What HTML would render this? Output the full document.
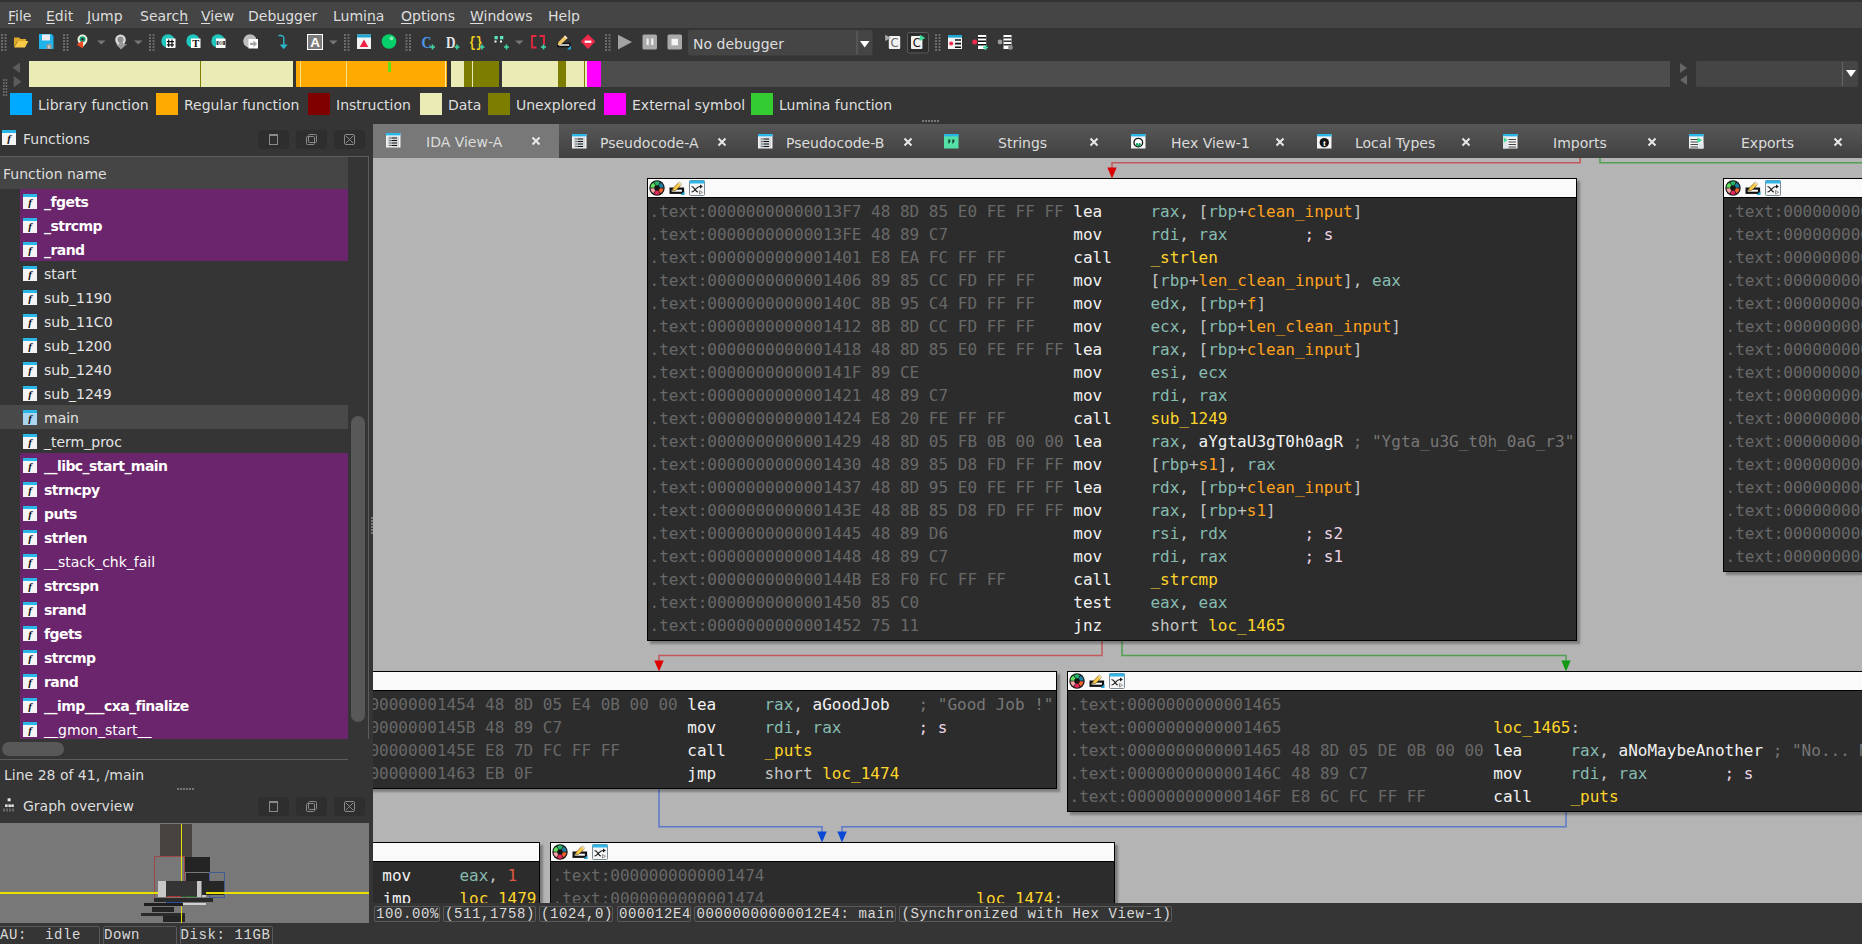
<!DOCTYPE html>
<html lang="en"><head><meta charset="utf-8"><title>IDA</title>
<style>
*{box-sizing:border-box}
html,body{margin:0;padding:0}
body{width:1862px;height:944px;overflow:hidden;position:relative;background:#353535;font-family:"DejaVu Sans","Liberation Sans",sans-serif;font-size:14px;color:#dedede}
.a{position:absolute}
.t{position:absolute;white-space:pre;line-height:20px;height:20px}
u{text-decoration:underline;text-underline-offset:2px}
.menubar{left:0;top:0;width:1862px;height:28px;background:#454545;border-top:2px solid #333}
.fn{position:absolute;left:0;width:348px;height:24px}
.fn.p{left:20px;width:328px;background:#6a256c}
.fn.sel{background:#494949}
.fn .ic{position:absolute;left:23px;top:5px}
.fn.p .ic{left:3px}
.fn .nm{position:absolute;left:44px;top:3px;line-height:20px;white-space:pre;color:#e4e4e4}
.fn.p .nm{left:24px;color:#fff}
.fn .nm.b{font-weight:bold;letter-spacing:-0.55px}
.tab{position:absolute;top:124px;height:34px}
.tab .lbl{position:absolute;top:8px;line-height:20px;white-space:pre;color:#dcdcdc}
.tab .x{position:absolute;top:11px}
.graph{left:373px;top:158px;width:1489px;height:745px;background:#b4b4b4;overflow:hidden}
.node{position:absolute;border:1px solid #000;background:#2c2c2c;box-shadow:3px 3px 2px rgba(0,0,0,.3)}
.node .tb{position:absolute;left:0;top:0;right:0;height:19px;background:#fafafa;border-bottom:1px solid #000}
.node pre{position:absolute;left:1.5px;top:20px;margin:0;font-family:"DejaVu Sans Mono","Liberation Mono",monospace;font-size:16px;line-height:23px;color:#f0f0f0}
.d{color:#686868}.r{color:#86bbb0}.p{color:#c4c4c4}.v{color:#ffa21f}.f{color:#ffd52a}.c{color:#777}.rc{color:#ecd6e6}.n{color:#dc5a42}.m{color:#f2f2f2}
.sb{position:absolute;font-family:"Liberation Mono",monospace;font-size:14px;letter-spacing:0.6px;line-height:17px;white-space:pre;color:#dadada}
.sbox{position:absolute;top:906px;height:16px;border:1px solid #5a5a5a;border-radius:2px}
.wb{position:absolute;width:31px;height:19px;background:#2e2e2e;border-radius:4px}
</style></head><body>

<div class="a menubar">
<span class="t" style="left:8px;top:4px"><u>F</u>ile</span>
<span class="t" style="left:46px;top:4px"><u>E</u>dit</span>
<span class="t" style="left:87px;top:4px"><u>J</u>ump</span>
<span class="t" style="left:140px;top:4px">Searc<u>h</u></span>
<span class="t" style="left:201px;top:4px"><u>V</u>iew</span>
<span class="t" style="left:248px;top:4px">Deb<u>u</u>gger</span>
<span class="t" style="left:333px;top:4px">Lumi<u>n</u>a</span>
<span class="t" style="left:401px;top:4px"><u>O</u>ptions</span>
<span class="t" style="left:470px;top:4px"><u>W</u>indows</span>
<span class="t" style="left:548px;top:4px">Help</span>
</div>

<div class="a" id="toolbar" style="left:0;top:28px;width:1862px;height:31px;background:#353535">
<svg class="a" style="left:0;top:0" width="1030" height="31" viewBox="0 0 1030 31"><g fill="#6a6a6a"><rect x="1" y="6" width="2" height="2"/><rect x="1" y="9" width="2" height="2"/><rect x="1" y="12" width="2" height="2"/><rect x="1" y="15" width="2" height="2"/><rect x="1" y="18" width="2" height="2"/><rect x="1" y="21" width="2" height="2"/><rect x="4.5" y="6" width="2" height="2"/><rect x="4.5" y="9" width="2" height="2"/><rect x="4.5" y="12" width="2" height="2"/><rect x="4.5" y="15" width="2" height="2"/><rect x="4.5" y="18" width="2" height="2"/><rect x="4.5" y="21" width="2" height="2"/></g><path d="M14 19.5 V9.5 H19 L20.5 11 H26 V13 H17.5 L14 19.5Z" fill="#e0a92a"/><path d="M14.3 19.5 L17.8 13 H28.3 L25 19.5Z" fill="#f7cb45"/><path d="M39 6 H51.5 L53.5 8 V21 H39Z" fill="#1eb4ea"/><rect x="42" y="6.5" width="8" height="6" fill="#f1e9f3"/><rect x="46.5" y="16" width="5" height="5" fill="#9a9a9a"/><rect x="48" y="17.5" width="2" height="3" fill="#c9c9c9"/><g fill="#6a6a6a"><rect x="63" y="6" width="2" height="2"/><rect x="63" y="9" width="2" height="2"/><rect x="63" y="12" width="2" height="2"/><rect x="63" y="15" width="2" height="2"/><rect x="63" y="18" width="2" height="2"/><rect x="63" y="21" width="2" height="2"/><rect x="66.5" y="6" width="2" height="2"/><rect x="66.5" y="9" width="2" height="2"/><rect x="66.5" y="12" width="2" height="2"/><rect x="66.5" y="15" width="2" height="2"/><rect x="66.5" y="18" width="2" height="2"/><rect x="66.5" y="21" width="2" height="2"/></g><path d="M82.5 6.5 a5 5 0 0 1 5 5 c0 3 -3 5.5 -5 8 c-2 -2.5 -5 -5 -5 -8 a5 5 0 0 1 5 -5Z" fill="#f3f1df"/><circle cx="82.5" cy="11.299999999999997" r="3" fill="#14a37f"/><circle cx="82.5" cy="11.299999999999997" r="1.3" fill="#2d2d2d"/><path d="M76.5 16.5 L83 12.5 L83 20.5Z" fill="#f04a24"/><path d="M97 12.5 L105.5 12.5 L101.25 16.5Z" fill="#777"/><path d="M120.5 6.5 a5.3 5.3 0 0 1 5.3 5.3 c0 3 -3 5.5 -5.3 8 c-2.2 -2.5 -5.3 -5 -5.3 -8 a5.3 5.3 0 0 1 5.3 -5.3Z" fill="#dcdcdc"/><circle cx="120.5" cy="11.5" r="3" fill="#8d8d8d"/><path d="M119 14 h4 v2 h4 l-6 5.5 l-5 -5 h3Z" fill="#9b9b9b"/><path d="M134 12.5 L142.5 12.5 L138.25 16.5Z" fill="#777"/><g fill="#6a6a6a"><rect x="149" y="6" width="2" height="2"/><rect x="149" y="9" width="2" height="2"/><rect x="149" y="12" width="2" height="2"/><rect x="149" y="15" width="2" height="2"/><rect x="149" y="18" width="2" height="2"/><rect x="149" y="21" width="2" height="2"/><rect x="152.5" y="6" width="2" height="2"/><rect x="152.5" y="9" width="2" height="2"/><rect x="152.5" y="12" width="2" height="2"/><rect x="152.5" y="15" width="2" height="2"/><rect x="152.5" y="18" width="2" height="2"/><rect x="152.5" y="21" width="2" height="2"/></g><circle cx="168.0" cy="13" r="6.7" fill="#20c7be"/><rect x="166.0" y="10.5" width="9.5" height="9.5" fill="#fff"/><path d="M168.7 11.5 V19 M172 11.5 V19 M166.8 13.700000000000003 H174 M166.8 16.799999999999997 H174" stroke="#111" stroke-width="1.2" fill="none"/><circle cx="193.0" cy="13" r="6.7" fill="#20c7be"/><rect x="191.0" y="10.5" width="9.5" height="9.5" fill="#fff"/><text x="195.8" y="19" font-family="Liberation Serif,serif" font-size="10.5" font-weight="bold" fill="#111" text-anchor="middle">T</text><circle cx="218.0" cy="13" r="6.7" fill="#20c7be"/><rect x="216.0" y="10.5" width="9.5" height="9.5" fill="#fff"/><rect x="216.5" y="13" width="8.5" height="4" fill="#444"/><text x="220.8" y="16.6" font-family="Liberation Sans,sans-serif" font-size="4.5" font-weight="bold" fill="#fff" text-anchor="middle">00</text><circle cx="250" cy="13" r="6.8" fill="#bdbdbd"/><rect x="248.5" y="11" width="9.5" height="9.5" fill="#fff"/><path d="M250 14.700000000000003 h3.5 v-2.2 l3.7 3.3 l-3.7 3.3 v-2.2 h-3.5Z" fill="#a4a4a4"/><path d="M278.5 7.5 h2.5 a2.8 2.8 0 0 1 2.8 2.8 V17" stroke="#2cb5c9" stroke-width="1.4" fill="none"/><path d="M279.7 16.5 h8 l-4 4.7Z" fill="#2cb5c9"/><rect x="307.5" y="6.5" width="15" height="15" fill="#7b7b7b" stroke="#fff"/><text x="315" y="19.299999999999997" font-family="Liberation Sans,sans-serif" font-size="13.5" font-weight="bold" fill="#fff" text-anchor="middle">A</text><path d="M329 12.5 L337.5 12.5 L333.25 16.5Z" fill="#777"/><g fill="#6a6a6a"><rect x="344" y="6" width="2" height="2"/><rect x="344" y="9" width="2" height="2"/><rect x="344" y="12" width="2" height="2"/><rect x="344" y="15" width="2" height="2"/><rect x="344" y="18" width="2" height="2"/><rect x="344" y="21" width="2" height="2"/><rect x="347.5" y="6" width="2" height="2"/><rect x="347.5" y="9" width="2" height="2"/><rect x="347.5" y="12" width="2" height="2"/><rect x="347.5" y="15" width="2" height="2"/><rect x="347.5" y="18" width="2" height="2"/><rect x="347.5" y="21" width="2" height="2"/></g><rect x="357" y="6.5" width="14" height="14.5" fill="#f4f4f4"/><rect x="357" y="6.5" width="14" height="3" fill="#1fa6d1"/><path d="M364 11.5 L368.3 19 H359.7Z" fill="#ee2345"/><circle cx="389" cy="13.5" r="7.3" fill="#05cf68"/><circle cx="391.5" cy="10.299999999999997" r="1.9" fill="#8af0b8"/><g fill="#6a6a6a"><rect x="405.5" y="6" width="2" height="2"/><rect x="405.5" y="9" width="2" height="2"/><rect x="405.5" y="12" width="2" height="2"/><rect x="405.5" y="15" width="2" height="2"/><rect x="405.5" y="18" width="2" height="2"/><rect x="405.5" y="21" width="2" height="2"/><rect x="409.0" y="6" width="2" height="2"/><rect x="409.0" y="9" width="2" height="2"/><rect x="409.0" y="12" width="2" height="2"/><rect x="409.0" y="15" width="2" height="2"/><rect x="409.0" y="18" width="2" height="2"/><rect x="409.0" y="21" width="2" height="2"/></g><text x="421.5" y="19.5" font-family="Liberation Serif,serif" font-size="17" font-weight="bold" fill="#4a96ee" textLength="10" lengthAdjust="spacingAndGlyphs">C</text><path d="M430.0 19 H435.0 M432.5 16.5 V21.5" stroke="#3fd6a8" stroke-width="1.6" fill="none"/><text x="446" y="19.5" font-family="Liberation Serif,serif" font-size="17" font-weight="bold" fill="#e6e6e6" textLength="9.5" lengthAdjust="spacingAndGlyphs">D</text><path d="M454.5 19 H459.5 M457 16.5 V21.5" stroke="#3fd6a8" stroke-width="1.6" fill="none"/><text x="469" y="18.5" font-family="Liberation Mono,monospace" font-size="14" font-weight="bold" fill="#f2d21c" textLength="13.5" lengthAdjust="spacingAndGlyphs">{}</text><path d="M479.5 19 H484.5 M482 16.5 V21.5" stroke="#3fd6a8" stroke-width="1.6" fill="none"/><g fill="#5fe3c0"><rect x="494.5" y="8" width="3.3" height="3.3"/><rect x="500" y="8" width="3.3" height="3.3"/></g><g fill="#e9fff8"><rect x="494.5" y="12.5" width="2" height="2"/><rect x="500" y="12.5" width="2" height="2"/></g><path d="M504.0 19 H509.0 M506.5 16.5 V21.5" stroke="#3fd6a8" stroke-width="1.6" fill="none"/><path d="M515 12.5 L523.5 12.5 L519.25 16.5Z" fill="#777"/><path d="M536.5 8 H532 V19.5 H536.5 M539.5 8 H544 V17" stroke="#e3283f" stroke-width="1.8" fill="none"/><path d="M541.0 19 H546.0 M543.5 16.5 V21.5" stroke="#3fd6a8" stroke-width="1.6" fill="none"/><rect x="558" y="15.5" width="12" height="3" fill="#fff" stroke="#111" stroke-width="1.6"/><path d="M557.5 17 L558.5 14 L565 7.5 L567.5 10 L561 16.5Z" fill="#f1c868"/><path d="M565 7.5 L567.5 10 L566.5 11 L564 8.5Z" fill="#f5ecd8"/><path d="M571 17.5 V21.5 H567Z" fill="#1fa3d4"/><path d="M588 6.299999999999997 L595.3 13.600000000000001 L588 21 L580.7 13.600000000000001Z" fill="#ee2b4a"/><rect x="584.7" y="12.600000000000001" width="6.6" height="2.2" fill="#fff"/><g fill="#6a6a6a"><rect x="605" y="6" width="2" height="2"/><rect x="605" y="9" width="2" height="2"/><rect x="605" y="12" width="2" height="2"/><rect x="605" y="15" width="2" height="2"/><rect x="605" y="18" width="2" height="2"/><rect x="605" y="21" width="2" height="2"/><rect x="608.5" y="6" width="2" height="2"/><rect x="608.5" y="9" width="2" height="2"/><rect x="608.5" y="12" width="2" height="2"/><rect x="608.5" y="15" width="2" height="2"/><rect x="608.5" y="18" width="2" height="2"/><rect x="608.5" y="21" width="2" height="2"/></g><path d="M618 6.700000000000003 L632 14 L618 21.5Z" fill="#a2a2a2"/><rect x="642.5" y="6.5" width="14.5" height="15" rx="1.5" fill="#a9a9a9"/><rect x="646.5" y="10.5" width="2.2" height="6.5" fill="#f0f0f0"/><rect x="651.2" y="10.5" width="2.2" height="6.5" fill="#f0f0f0"/><rect x="667.5" y="6.5" width="14.5" height="15" rx="1.5" fill="#a9a9a9"/><rect x="671.5" y="10.799999999999997" width="6.5" height="6.5" fill="#f4f4f4"/><rect x="688" y="2" width="184.5" height="25.5" rx="2" fill="#454545"/><rect x="856.5" y="3" width="1" height="23.5" fill="#666"/><path d="M860 13 H869.5 L864.7 19.5Z" fill="#fff"/><text x="693" y="21" font-family="DejaVu Sans,sans-serif" font-size="14" font-weight="normal" fill="#dedede" >No debugger</text><rect x="888.8" y="8" width="11.4" height="13" rx="1" fill="#f2f2f2"/><text x="894.5" y="19" font-family="DejaVu Sans,sans-serif" font-size="11.5" font-weight="normal" fill="#666" text-anchor="middle">C</text><path d="M885.2 6.799999999999997 L891 10 L885.2 13Z" fill="#aaa"/><rect x="907.5" y="4.5" width="21" height="20.5" rx="2" fill="#2d2d2d" stroke="#5a5a5a"/><rect x="911" y="8" width="11.4" height="13" rx="1" fill="#f2f2f2"/><text x="916.7" y="19" font-family="DejaVu Sans,sans-serif" font-size="11.5" font-weight="normal" fill="#111" text-anchor="middle">C</text><path d="M919.8 6.799999999999997 L925.3 10 L919.8 13Z" fill="#3ddc97"/><g fill="#6a6a6a"><rect x="935" y="6" width="2" height="2"/><rect x="935" y="9" width="2" height="2"/><rect x="935" y="12" width="2" height="2"/><rect x="935" y="15" width="2" height="2"/><rect x="935" y="18" width="2" height="2"/><rect x="935" y="21" width="2" height="2"/><rect x="938.5" y="6" width="2" height="2"/><rect x="938.5" y="9" width="2" height="2"/><rect x="938.5" y="12" width="2" height="2"/><rect x="938.5" y="15" width="2" height="2"/><rect x="938.5" y="18" width="2" height="2"/><rect x="938.5" y="21" width="2" height="2"/></g><rect x="948" y="7" width="14" height="14" fill="#f4f4f4"/><rect x="948" y="7" width="14" height="2.6" fill="#1fa6d1"/><circle cx="951.2" cy="15.600000000000001" r="2" fill="#ee2b4a"/><path d="M955 12 H961 M955 15.600000000000001 H961 M955 19.200000000000003 H961" stroke="#111" stroke-width="1.6"/><circle cx="974.7" cy="14" r="2.5" fill="#ee2b4a"/><rect x="978" y="7" width="8.2" height="14" fill="#fff"/><path d="M978 9.700000000000003 h8.2 M978 13.200000000000003 h8.2 M978 16.700000000000003 h8.2" stroke="#111" stroke-width="1.5"/><path d="M983.0 19.5 H988.0 M985.5 17.0 V22.0" stroke="#3fd6a8" stroke-width="1.6" fill="none"/><circle cx="1000" cy="14" r="2.4" fill="#9a9a9a"/><rect x="1003.5" y="7" width="8" height="14" fill="#fff"/><path d="M1003.5 9.700000000000003 h8 M1003.5 13.200000000000003 h8 M1003.5 16.700000000000003 h8" stroke="#333" stroke-width="1.5"/><circle cx="1010.5" cy="19.5" r="2.4" fill="#8b8b8b"/></svg>
</div>

<div class="a" id="nav" style="left:0;top:59px;width:1862px;height:40px">
<div class="a" style="left:29px;top:2px;width:1641px;height:26px;background:#4d4d4d"></div>
<div class="a" style="left:29px;top:2px;width:264px;height:26px;background:#ebebb5"></div>
<div class="a" style="left:200px;top:2px;width:1px;height:26px;background:#808000"></div>
<div class="a" style="left:293px;top:2px;width:3px;height:26px;background:#353535"></div>
<div class="a" style="left:296px;top:2px;width:151px;height:26px;background:#ffaa00"></div>
<div class="a" style="left:300px;top:2px;width:1px;height:26px;background:#ffe08a"></div>
<div class="a" style="left:346px;top:2px;width:1px;height:26px;background:#ffe08a"></div>
<div class="a" style="left:388px;top:3px;width:3px;height:10px;background:#66e01a"></div>
<div class="a" style="left:445px;top:2px;width:1px;height:26px;background:#ffe9a0"></div>
<div class="a" style="left:447px;top:2px;width:4px;height:26px;background:#353535"></div>
<div class="a" style="left:451px;top:2px;width:13px;height:26px;background:#ebebb5"></div>
<div class="a" style="left:464px;top:2px;width:35px;height:26px;background:#7d7d00"></div>
<div class="a" style="left:472px;top:2px;width:1px;height:26px;background:#ebebb5"></div>
<div class="a" style="left:499px;top:2px;width:3px;height:26px;background:#353535"></div>
<div class="a" style="left:502px;top:2px;width:56px;height:26px;background:#ebebb5"></div>
<div class="a" style="left:558px;top:2px;width:8px;height:26px;background:#7d7d00"></div>
<div class="a" style="left:566px;top:2px;width:21px;height:26px;background:#ebebb5"></div>
<div class="a" style="left:584px;top:2px;width:1px;height:26px;background:#7d7d00"></div>
<div class="a" style="left:587px;top:2px;width:14px;height:26px;background:#ff00ff"></div>
<svg class="a" style="left:0;top:0" width="30" height="40"><path d="M20 3.5 L20 14 L12.6 8.7Z M13.7 17 L13.7 28.5 L21.5 22.8Z" fill="#5c5c5c"/><g fill="#6a6a6a"><rect x="3" y="20" width="1.6" height="2"/><rect x="3" y="23" width="1.6" height="2"/><rect x="3" y="26" width="1.6" height="2"/><rect x="3" y="29" width="1.6" height="2"/><rect x="3" y="32" width="1.6" height="2"/><rect x="3" y="35" width="1.6" height="2"/><rect x="5.6" y="20" width="1.6" height="2"/><rect x="5.6" y="23" width="1.6" height="2"/><rect x="5.6" y="26" width="1.6" height="2"/><rect x="5.6" y="29" width="1.6" height="2"/><rect x="5.6" y="32" width="1.6" height="2"/><rect x="5.6" y="35" width="1.6" height="2"/></g></svg>
<svg class="a" style="left:1672px;top:0" width="24" height="31"><path d="M8 4 L8 14 L15 9Z M15 16 L15 26 L8 21Z" fill="#666"/></svg>
<div class="a" style="left:1696px;top:2px;width:162px;height:26px;background:#454545;border-radius:2px"></div>
<div class="a" style="left:1842px;top:3px;width:1px;height:24px;background:#666"></div>
<svg class="a" style="left:1844px;top:9px" width="14" height="10"><path d="M2 2 L12 2 L7 9Z" fill="#fff"/></svg>
</div>

<div class="a" style="left:10px;top:93px;width:22px;height:22px;background:#00aaff"></div>
<span class="t" style="left:38px;top:95px">Library function</span>
<div class="a" style="left:156px;top:93px;width:22px;height:22px;background:#ffaa00"></div>
<span class="t" style="left:184px;top:95px">Regular function</span>
<div class="a" style="left:308px;top:93px;width:22px;height:22px;background:#800000"></div>
<span class="t" style="left:336px;top:95px">Instruction</span>
<div class="a" style="left:420px;top:93px;width:22px;height:22px;background:#ebebb5"></div>
<span class="t" style="left:448px;top:95px">Data</span>
<div class="a" style="left:488px;top:93px;width:22px;height:22px;background:#7d7d00"></div>
<span class="t" style="left:516px;top:95px">Unexplored</span>
<div class="a" style="left:604px;top:93px;width:22px;height:22px;background:#ff00ff"></div>
<span class="t" style="left:632px;top:95px">External symbol</span>
<div class="a" style="left:751px;top:93px;width:22px;height:22px;background:#33cc33"></div>
<span class="t" style="left:779px;top:95px">Lumina function</span>


<div class="a" style="left:922px;top:120px;width:18px;height:2px;background:repeating-linear-gradient(90deg,#777 0 2px,transparent 2px 3px)"></div>
<div class="a" id="fpanel" style="left:0;top:124px;width:370px;height:670px">
<svg class="a" style="left:2px;top:6px" width="14" height="15" viewBox="0 0 14 15"><rect x="0" y="0" width="14" height="15" fill="#f4f4f4"/><rect x="0" y="0" width="14" height="3" fill="#29b6e8"/><text x="7" y="12.3" font-family="Liberation Serif,serif" font-style="italic" font-weight="bold" font-size="11" text-anchor="middle" fill="#111">f</text></svg>
<span class="t" style="left:23px;top:5px">Functions</span>
<div class="wb" style="left:258px;top:6px"><div class="a" style="left:11px;top:4px;width:9px;height:11px;border:1px solid #8a8a8a;border-top-width:2px"></div></div>
<div class="wb" style="left:296px;top:6px"><svg class="a" style="left:9px;top:3px" width="13" height="13" fill="none" stroke="#8a8a8a"><rect x="3.5" y="1.5" width="8" height="8" rx="1"/><rect x="1.5" y="3.5" width="8" height="8" rx="1"/></svg></div>
<div class="wb" style="left:334px;top:6px"><svg class="a" style="left:9px;top:3px" width="13" height="13" fill="none" stroke="#8a8a8a"><rect x="1.5" y="1.5" width="10" height="10" rx="1.5"/><path d="M3 3 L10 10 M10 3 L3 10"/></svg></div>
<div class="a" style="left:0;top:32px;width:369px;height:583px;border-top:1px solid #5c5c5c;border-right:1px solid #5c5c5c"></div>
<div class="a" style="left:0;top:33px;width:348px;height:32px;background:#454545"></div>
<span class="t" style="left:3px;top:40px">Function name</span>
<div class="a" style="left:0;top:0;width:348px;height:615px;overflow:hidden">
<div class="fn p" style="top:65px"><svg class="ic" width="14" height="15" viewBox="0 0 14 15"><rect x="0" y="0" width="14" height="15" fill="#f4f4f4"/><rect x="0" y="0" width="14" height="3" fill="#29b6e8"/><text x="7" y="12.3" font-family="Liberation Serif,serif" font-style="italic" font-weight="bold" font-size="11" text-anchor="middle" fill="#111">f</text></svg><span class="nm b">_fgets</span></div>
<div class="fn p" style="top:89px"><svg class="ic" width="14" height="15" viewBox="0 0 14 15"><rect x="0" y="0" width="14" height="15" fill="#f4f4f4"/><rect x="0" y="0" width="14" height="3" fill="#29b6e8"/><text x="7" y="12.3" font-family="Liberation Serif,serif" font-style="italic" font-weight="bold" font-size="11" text-anchor="middle" fill="#111">f</text></svg><span class="nm b">_strcmp</span></div>
<div class="fn p" style="top:113px"><svg class="ic" width="14" height="15" viewBox="0 0 14 15"><rect x="0" y="0" width="14" height="15" fill="#f4f4f4"/><rect x="0" y="0" width="14" height="3" fill="#29b6e8"/><text x="7" y="12.3" font-family="Liberation Serif,serif" font-style="italic" font-weight="bold" font-size="11" text-anchor="middle" fill="#111">f</text></svg><span class="nm b">_rand</span></div>
<div class="fn" style="top:137px"><svg class="ic" width="14" height="15" viewBox="0 0 14 15"><rect x="0" y="0" width="14" height="15" fill="#f4f4f4"/><rect x="0" y="0" width="14" height="3" fill="#29b6e8"/><text x="7" y="12.3" font-family="Liberation Serif,serif" font-style="italic" font-weight="bold" font-size="11" text-anchor="middle" fill="#111">f</text></svg><span class="nm">start</span></div>
<div class="fn" style="top:161px"><svg class="ic" width="14" height="15" viewBox="0 0 14 15"><rect x="0" y="0" width="14" height="15" fill="#f4f4f4"/><rect x="0" y="0" width="14" height="3" fill="#29b6e8"/><text x="7" y="12.3" font-family="Liberation Serif,serif" font-style="italic" font-weight="bold" font-size="11" text-anchor="middle" fill="#111">f</text></svg><span class="nm">sub_1190</span></div>
<div class="fn" style="top:185px"><svg class="ic" width="14" height="15" viewBox="0 0 14 15"><rect x="0" y="0" width="14" height="15" fill="#f4f4f4"/><rect x="0" y="0" width="14" height="3" fill="#29b6e8"/><text x="7" y="12.3" font-family="Liberation Serif,serif" font-style="italic" font-weight="bold" font-size="11" text-anchor="middle" fill="#111">f</text></svg><span class="nm">sub_11C0</span></div>
<div class="fn" style="top:209px"><svg class="ic" width="14" height="15" viewBox="0 0 14 15"><rect x="0" y="0" width="14" height="15" fill="#f4f4f4"/><rect x="0" y="0" width="14" height="3" fill="#29b6e8"/><text x="7" y="12.3" font-family="Liberation Serif,serif" font-style="italic" font-weight="bold" font-size="11" text-anchor="middle" fill="#111">f</text></svg><span class="nm">sub_1200</span></div>
<div class="fn" style="top:233px"><svg class="ic" width="14" height="15" viewBox="0 0 14 15"><rect x="0" y="0" width="14" height="15" fill="#f4f4f4"/><rect x="0" y="0" width="14" height="3" fill="#29b6e8"/><text x="7" y="12.3" font-family="Liberation Serif,serif" font-style="italic" font-weight="bold" font-size="11" text-anchor="middle" fill="#111">f</text></svg><span class="nm">sub_1240</span></div>
<div class="fn" style="top:257px"><svg class="ic" width="14" height="15" viewBox="0 0 14 15"><rect x="0" y="0" width="14" height="15" fill="#f4f4f4"/><rect x="0" y="0" width="14" height="3" fill="#29b6e8"/><text x="7" y="12.3" font-family="Liberation Serif,serif" font-style="italic" font-weight="bold" font-size="11" text-anchor="middle" fill="#111">f</text></svg><span class="nm">sub_1249</span></div>
<div class="fn sel" style="top:281px"><svg class="ic" width="14" height="15" viewBox="0 0 14 15"><rect x="0" y="0" width="14" height="15" fill="#a9d5ef"/><rect x="0" y="0" width="14" height="3" fill="#29b6e8"/><text x="7" y="12.3" font-family="Liberation Serif,serif" font-style="italic" font-weight="bold" font-size="11" text-anchor="middle" fill="#111">f</text></svg><span class="nm">main</span></div>
<div class="fn" style="top:305px"><svg class="ic" width="14" height="15" viewBox="0 0 14 15"><rect x="0" y="0" width="14" height="15" fill="#f4f4f4"/><rect x="0" y="0" width="14" height="3" fill="#29b6e8"/><text x="7" y="12.3" font-family="Liberation Serif,serif" font-style="italic" font-weight="bold" font-size="11" text-anchor="middle" fill="#111">f</text></svg><span class="nm">_term_proc</span></div>
<div class="fn p" style="top:329px"><svg class="ic" width="14" height="15" viewBox="0 0 14 15"><rect x="0" y="0" width="14" height="15" fill="#f4f4f4"/><rect x="0" y="0" width="14" height="3" fill="#29b6e8"/><text x="7" y="12.3" font-family="Liberation Serif,serif" font-style="italic" font-weight="bold" font-size="11" text-anchor="middle" fill="#111">f</text></svg><span class="nm b">__libc_start_main</span></div>
<div class="fn p" style="top:353px"><svg class="ic" width="14" height="15" viewBox="0 0 14 15"><rect x="0" y="0" width="14" height="15" fill="#f4f4f4"/><rect x="0" y="0" width="14" height="3" fill="#29b6e8"/><text x="7" y="12.3" font-family="Liberation Serif,serif" font-style="italic" font-weight="bold" font-size="11" text-anchor="middle" fill="#111">f</text></svg><span class="nm b">strncpy</span></div>
<div class="fn p" style="top:377px"><svg class="ic" width="14" height="15" viewBox="0 0 14 15"><rect x="0" y="0" width="14" height="15" fill="#f4f4f4"/><rect x="0" y="0" width="14" height="3" fill="#29b6e8"/><text x="7" y="12.3" font-family="Liberation Serif,serif" font-style="italic" font-weight="bold" font-size="11" text-anchor="middle" fill="#111">f</text></svg><span class="nm b">puts</span></div>
<div class="fn p" style="top:401px"><svg class="ic" width="14" height="15" viewBox="0 0 14 15"><rect x="0" y="0" width="14" height="15" fill="#f4f4f4"/><rect x="0" y="0" width="14" height="3" fill="#29b6e8"/><text x="7" y="12.3" font-family="Liberation Serif,serif" font-style="italic" font-weight="bold" font-size="11" text-anchor="middle" fill="#111">f</text></svg><span class="nm b">strlen</span></div>
<div class="fn p" style="top:425px"><svg class="ic" width="14" height="15" viewBox="0 0 14 15"><rect x="0" y="0" width="14" height="15" fill="#f4f4f4"/><rect x="0" y="0" width="14" height="3" fill="#29b6e8"/><text x="7" y="12.3" font-family="Liberation Serif,serif" font-style="italic" font-weight="bold" font-size="11" text-anchor="middle" fill="#111">f</text></svg><span class="nm">__stack_chk_fail</span></div>
<div class="fn p" style="top:449px"><svg class="ic" width="14" height="15" viewBox="0 0 14 15"><rect x="0" y="0" width="14" height="15" fill="#f4f4f4"/><rect x="0" y="0" width="14" height="3" fill="#29b6e8"/><text x="7" y="12.3" font-family="Liberation Serif,serif" font-style="italic" font-weight="bold" font-size="11" text-anchor="middle" fill="#111">f</text></svg><span class="nm b">strcspn</span></div>
<div class="fn p" style="top:473px"><svg class="ic" width="14" height="15" viewBox="0 0 14 15"><rect x="0" y="0" width="14" height="15" fill="#f4f4f4"/><rect x="0" y="0" width="14" height="3" fill="#29b6e8"/><text x="7" y="12.3" font-family="Liberation Serif,serif" font-style="italic" font-weight="bold" font-size="11" text-anchor="middle" fill="#111">f</text></svg><span class="nm b">srand</span></div>
<div class="fn p" style="top:497px"><svg class="ic" width="14" height="15" viewBox="0 0 14 15"><rect x="0" y="0" width="14" height="15" fill="#f4f4f4"/><rect x="0" y="0" width="14" height="3" fill="#29b6e8"/><text x="7" y="12.3" font-family="Liberation Serif,serif" font-style="italic" font-weight="bold" font-size="11" text-anchor="middle" fill="#111">f</text></svg><span class="nm b">fgets</span></div>
<div class="fn p" style="top:521px"><svg class="ic" width="14" height="15" viewBox="0 0 14 15"><rect x="0" y="0" width="14" height="15" fill="#f4f4f4"/><rect x="0" y="0" width="14" height="3" fill="#29b6e8"/><text x="7" y="12.3" font-family="Liberation Serif,serif" font-style="italic" font-weight="bold" font-size="11" text-anchor="middle" fill="#111">f</text></svg><span class="nm b">strcmp</span></div>
<div class="fn p" style="top:545px"><svg class="ic" width="14" height="15" viewBox="0 0 14 15"><rect x="0" y="0" width="14" height="15" fill="#f4f4f4"/><rect x="0" y="0" width="14" height="3" fill="#29b6e8"/><text x="7" y="12.3" font-family="Liberation Serif,serif" font-style="italic" font-weight="bold" font-size="11" text-anchor="middle" fill="#111">f</text></svg><span class="nm b">rand</span></div>
<div class="fn p" style="top:569px"><svg class="ic" width="14" height="15" viewBox="0 0 14 15"><rect x="0" y="0" width="14" height="15" fill="#f4f4f4"/><rect x="0" y="0" width="14" height="3" fill="#29b6e8"/><text x="7" y="12.3" font-family="Liberation Serif,serif" font-style="italic" font-weight="bold" font-size="11" text-anchor="middle" fill="#111">f</text></svg><span class="nm b">__imp___cxa_finalize</span></div>
<div class="fn p" style="top:593px"><svg class="ic" width="14" height="15" viewBox="0 0 14 15"><rect x="0" y="0" width="14" height="15" fill="#f4f4f4"/><rect x="0" y="0" width="14" height="3" fill="#29b6e8"/><text x="7" y="12.3" font-family="Liberation Serif,serif" font-style="italic" font-weight="bold" font-size="11" text-anchor="middle" fill="#111">f</text></svg><span class="nm">__gmon_start__</span></div>
</div>
<div class="a" style="left:351px;top:292px;width:14px;height:306px;background:#585858;border-radius:7px"></div>
<div class="a" style="left:2px;top:618px;width:62px;height:14px;background:#585858;border-radius:7px"></div>
<div class="a" style="left:0;top:635px;width:348px;height:1px;background:#5c5c5c"></div>
<span class="t" style="left:4px;top:641px">Line 28 of 41, /main</span>
<div class="a" style="left:177px;top:664px;width:18px;height:2px;background:repeating-linear-gradient(90deg,#777 0 2px,transparent 2px 3px)"></div>
</div>

<div class="a" id="gov" style="left:0;top:794px;width:370px;height:130px">
<svg class="a" style="left:3px;top:3px" width="13" height="16"><g fill="#e6e6e6"><rect x="4.6" y="1.3" width="3" height="3"/><rect x="2.1" y="7.4" width="2.5" height="2.6"/><rect x="5.4" y="7.4" width="2.5" height="2.6"/><rect x="8.3" y="7.4" width="2.5" height="2.6"/></g><g fill="#9a9a9a"><rect x="0.5" y="11.5" width="1" height="3"/><rect x="3.5" y="11.5" width="1" height="3"/><rect x="6.5" y="11.5" width="1" height="3"/><rect x="9.5" y="11.5" width="1" height="3"/></g></svg>
<span class="t" style="left:23px;top:2px">Graph overview</span>
<div class="wb" style="left:258px;top:3px"><div class="a" style="left:11px;top:4px;width:9px;height:11px;border:1px solid #8a8a8a;border-top-width:2px"></div></div>
<div class="wb" style="left:296px;top:3px"><svg class="a" style="left:9px;top:3px" width="13" height="13" fill="none" stroke="#8a8a8a"><rect x="3.5" y="1.5" width="8" height="8" rx="1"/><rect x="1.5" y="3.5" width="8" height="8" rx="1"/></svg></div>
<div class="wb" style="left:334px;top:3px"><svg class="a" style="left:9px;top:3px" width="13" height="13" fill="none" stroke="#8a8a8a"><rect x="1.5" y="1.5" width="10" height="10" rx="1.5"/><path d="M3 3 L10 10 M10 3 L3 10"/></svg></div>
<div class="a" style="left:0;top:29px;width:369px;height:100px;background:#787878;overflow:hidden">
<div class="a" style="left:160px;top:1px;width:32px;height:32.5px;background:#464340;"></div><div class="a" style="left:185.3px;top:34px;width:24.7px;height:15.2px;background:#242424;"></div><div class="a" style="left:186.2px;top:50.2px;width:22.6px;height:8.2px;background:#242424;"></div><div class="a" style="left:153.6px;top:33.4px;width:31.4px;height:43.6px;border:1px solid #9a4848"></div><div class="a" style="left:209px;top:49.2px;width:15.8px;height:25.4px;border:1px solid #3f5c96"></div><div class="a" style="left:157.8px;top:58.4px;width:8.6px;height:15.4px;background:#c8c8c8;"></div><div class="a" style="left:166.4px;top:58.4px;width:31px;height:15.4px;background:#343434;"></div><div class="a" style="left:197.4px;top:58.4px;width:4.1px;height:15.4px;background:#c8c8c8;"></div><div class="a" style="left:201.5px;top:71.8px;width:4.5px;height:2px;background:#c8c8c8;"></div><div class="a" style="left:201.7px;top:58.4px;width:22.8px;height:13.4px;background:#262626;"></div><div class="a" style="left:167px;top:73px;width:14px;height:1px;background:#b03030;"></div><div class="a" style="left:182px;top:73px;width:15px;height:1px;background:#206020;"></div><div class="a" style="left:154.2px;top:74.6px;width:58.5px;height:4.4px;background:#2b2b2b;"></div><div class="a" style="left:144px;top:80px;width:38.8px;height:2.7px;background:#1e1e1e;"></div><div class="a" style="left:166px;top:79.3px;width:16px;height:1px;background:#2a4a9a;"></div><div class="a" style="left:182.8px;top:79.5px;width:23.2px;height:2.5px;background:#d0d0d0;"></div><div class="a" style="left:152.4px;top:84px;width:21.6px;height:5.4px;background:#252525;"></div><div class="a" style="left:141px;top:90px;width:43.6px;height:2.5px;background:#2b2b2b;"></div><div class="a" style="left:163.3px;top:92.5px;width:21.3px;height:6.3px;background:#252525;"></div><div class="a" style="left:180.6px;top:1px;width:1.8px;height:57.4px;background:#e8e000;"></div><div class="a" style="left:180.6px;top:82.5px;width:1.8px;height:17.5px;background:#e8e000;"></div><div class="a" style="left:0px;top:68.8px;width:157.8px;height:1.8px;background:#e8e000;"></div><div class="a" style="left:206px;top:68.8px;width:163px;height:1.8px;background:#e8e000;"></div>
</div>
</div>

<div class="a" style="left:371px;top:517px;width:2px;height:17px;background:repeating-linear-gradient(180deg,#777 0 2px,transparent 2px 3px)"></div>
<div class="a" style="left:373px;top:124px;width:1489px;height:34px;background:linear-gradient(#575757,#414141)"></div>
<div class="tab" style="left:373px;width:186px;background:#787878"></div>
<svg class="a" style="left:385.5px;top:132.5px" width="15" height="15" viewBox="0 0 15 15"><rect x="0" y="0" width="14.5" height="14.5" fill="#f4f4f4"/><rect x="0" y="0" width="14.5" height="2.4" fill="#29b6e8"/><rect x="1.5" y="3.5" width="11.5" height="10" fill="#cfd4d8"/><path d="M5.5 5 H11 M5.5 7.5 H11 M5.5 10 H11 M5.5 12.5 H11" stroke="#111" stroke-width="1.2"/><path d="M3.5 5 h1 M3.5 7.5 h1 M3.5 10 h1 M3.5 12.5 h1" stroke="#111" stroke-width="1.2"/></svg>
<span class="t" style="left:426px;top:132px;color:#dcdcdc">IDA View-A</span>
<svg class="a" style="left:531px;top:136px" width="10" height="10"><path d="M1.5 1.5 L8.5 8.5 M8.5 1.5 L1.5 8.5" stroke="#e8e8e8" stroke-width="2" fill="none"/></svg>
<svg class="a" style="left:571.5px;top:134px" width="15" height="15" viewBox="0 0 15 15"><rect x="0" y="0" width="14.5" height="14.5" fill="#f4f4f4"/><rect x="0" y="0" width="14.5" height="2.4" fill="#29b6e8"/><rect x="1.5" y="3.5" width="11.5" height="10" fill="#cfd4d8"/><path d="M5.5 5 H11 M5.5 7.5 H11 M5.5 10 H11 M5.5 12.5 H11" stroke="#111" stroke-width="1.2"/><path d="M3.5 5 h1 M3.5 7.5 h1 M3.5 10 h1 M3.5 12.5 h1" stroke="#111" stroke-width="1.2"/></svg>
<span class="t" style="left:600px;top:133px;color:#dcdcdc">Pseudocode-A</span>
<svg class="a" style="left:717px;top:137px" width="10" height="10"><path d="M1.5 1.5 L8.5 8.5 M8.5 1.5 L1.5 8.5" stroke="#e8e8e8" stroke-width="2" fill="none"/></svg>
<svg class="a" style="left:757.5px;top:134px" width="15" height="15" viewBox="0 0 15 15"><rect x="0" y="0" width="14.5" height="14.5" fill="#f4f4f4"/><rect x="0" y="0" width="14.5" height="2.4" fill="#29b6e8"/><rect x="1.5" y="3.5" width="11.5" height="10" fill="#cfd4d8"/><path d="M5.5 5 H11 M5.5 7.5 H11 M5.5 10 H11 M5.5 12.5 H11" stroke="#111" stroke-width="1.2"/><path d="M3.5 5 h1 M3.5 7.5 h1 M3.5 10 h1 M3.5 12.5 h1" stroke="#111" stroke-width="1.2"/></svg>
<span class="t" style="left:786px;top:133px;color:#dcdcdc">Pseudocode-B</span>
<svg class="a" style="left:903px;top:137px" width="10" height="10"><path d="M1.5 1.5 L8.5 8.5 M8.5 1.5 L1.5 8.5" stroke="#e8e8e8" stroke-width="2" fill="none"/></svg>
<svg class="a" style="left:943.5px;top:134px" width="15" height="15" viewBox="0 0 15 15"><rect x="0" y="0" width="14.5" height="14.5" fill="#55e0a8"/><rect x="0" y="0" width="14.5" height="2.4" fill="#29b6e8"/><path d="M4.3 5.6 h2 v2 l-1.2 1.8 h-0.8 Z M8.3 5.6 h2 v2 l-1.2 1.8 h-0.8 Z" fill="#143d2c"/></svg>
<span class="t" style="left:998px;top:133px;color:#dcdcdc">Strings</span>
<svg class="a" style="left:1089px;top:137px" width="10" height="10"><path d="M1.5 1.5 L8.5 8.5 M8.5 1.5 L1.5 8.5" stroke="#e8e8e8" stroke-width="2" fill="none"/></svg>
<svg class="a" style="left:1130.5px;top:134px" width="15" height="15" viewBox="0 0 15 15"><rect x="0" y="0" width="14.5" height="14.5" fill="#f4f4f4"/><rect x="0" y="0" width="14.5" height="2.4" fill="#29b6e8"/><circle cx="7.3" cy="8.6" r="4.3" fill="#fff" stroke="#111" stroke-width="1.3"/><path d="M4.5 10.5 a3 3 0 0 0 5.6 0 l-1 -1.5 h-3.6Z" fill="#14a060"/><path d="M7.3 6.5 v4" stroke="#fff" stroke-width="1"/></svg>
<span class="t" style="left:1171px;top:133px;color:#dcdcdc">Hex View-1</span>
<svg class="a" style="left:1275px;top:137px" width="10" height="10"><path d="M1.5 1.5 L8.5 8.5 M8.5 1.5 L1.5 8.5" stroke="#e8e8e8" stroke-width="2" fill="none"/></svg>
<svg class="a" style="left:1316.5px;top:134px" width="15" height="15" viewBox="0 0 15 15"><rect x="0" y="0" width="14.5" height="14.5" fill="#f4f4f4"/><rect x="0" y="0" width="14.5" height="2.4" fill="#29b6e8"/><circle cx="7.3" cy="8.6" r="4.7" fill="#111"/><text x="7.3" y="11.6" font-family="Liberation Serif,serif" font-weight="bold" font-size="8.5" fill="#fff" text-anchor="middle">t</text></svg>
<span class="t" style="left:1355px;top:133px;color:#dcdcdc">Local Types</span>
<svg class="a" style="left:1461px;top:137px" width="10" height="10"><path d="M1.5 1.5 L8.5 8.5 M8.5 1.5 L1.5 8.5" stroke="#e8e8e8" stroke-width="2" fill="none"/></svg>
<svg class="a" style="left:1502.5px;top:134px" width="15" height="15" viewBox="0 0 15 15"><rect x="0" y="0" width="14.5" height="14.5" fill="#f4f4f4"/><rect x="0" y="0" width="14.5" height="2.4" fill="#29b6e8"/><rect x="0" y="2.4" width="4.5" height="12" fill="#dfe5ea"/><path d="M0.8 3.5 L4.6 6 L0.8 8.5Z" fill="#3ddc97"/><path d="M5.5 5.5 H13 M5.5 8 H13 M5.5 10.5 H13 M5.5 13 H13" stroke="#444" stroke-width="1.1"/></svg>
<span class="t" style="left:1553px;top:133px;color:#dcdcdc">Imports</span>
<svg class="a" style="left:1647px;top:137px" width="10" height="10"><path d="M1.5 1.5 L8.5 8.5 M8.5 1.5 L1.5 8.5" stroke="#e8e8e8" stroke-width="2" fill="none"/></svg>
<svg class="a" style="left:1688.5px;top:134px" width="15" height="15" viewBox="0 0 15 15"><rect x="0" y="0" width="14.5" height="14.5" fill="#f4f4f4"/><rect x="0" y="0" width="14.5" height="2.4" fill="#29b6e8"/><path d="M1.5 5.5 H9 M1.5 8 H9 M1.5 10.5 H9 M1.5 13 H9" stroke="#444" stroke-width="1.1"/><rect x="9.5" y="9.5" width="5" height="5" fill="#dfe5ea"/><path d="M8.5 3.3 L13.3 6.3 L8.5 9.3Z" fill="#3ddc97"/></svg>

<span class="t" style="left:1741px;top:133px;color:#dcdcdc">Exports</span>
<svg class="a" style="left:1833px;top:137px" width="10" height="10"><path d="M1.5 1.5 L8.5 8.5 M8.5 1.5 L1.5 8.5" stroke="#e8e8e8" stroke-width="2" fill="none"/></svg>


<div class="a graph">
<svg class="a" style="left:0;top:0" width="1489" height="745" fill="none" stroke-width="1.5"><polyline points="1207.2,0 1207.2,4.8 739,4.8 739,12" stroke="#c4585c"/><polyline points="1227,0 1227,4.8 1489,4.8" stroke="#4f9e52"/><polyline points="729,483 729,497.6 286,497.6 286,505" stroke="#c4585c"/><polyline points="749,483 749,497.6 1193,497.6 1193,505" stroke="#4f9e52"/><polyline points="286,631 286,668.8 449,668.8 449,676" stroke="#5a79c9"/><polyline points="1193,654 1193,668.8 469,668.8 469,676" stroke="#5a79c9"/><path d="M734.3 9.5 L743.7 9.5 L739 20.5Z" fill="#dc0000"/><path d="M281.3 502.5 L290.7 502.5 L286 513.5Z" fill="#dc0000"/><path d="M1188.3 502.5 L1197.7 502.5 L1193 513.5Z" fill="#119911"/><path d="M444.3 673.5 L453.7 673.5 L449 684.5Z" fill="#0a49d8"/><path d="M464.3 673.5 L473.7 673.5 L469 684.5Z" fill="#0a49d8"/></svg>
<div class="node" style="left:274px;top:20px;width:930px;height:463px"><div class="tb" style="height:19px"><svg class="a" style="left:0.5px;top:1px" width="16" height="16" viewBox="0 0 16 16"><circle cx="8" cy="8" r="7.7" fill="#111"/><path d="M8 8 L11.69 2.53 A6.6 6.6 0 0 1 14.58 7.54Z" fill="#1d7f9f"/><path d="M8 8 L14.58 8.46 A6.6 6.6 0 0 1 11.69 13.47Z" fill="#f0602d"/><path d="M8 8 L10.89 13.93 A6.6 6.6 0 0 1 5.11 13.93Z" fill="#e3295c"/><path d="M8 8 L4.31 13.47 A6.6 6.6 0 0 1 1.42 8.46Z" fill="#f5a3a6"/><path d="M8 8 L1.42 7.54 A6.6 6.6 0 0 1 4.31 2.53Z" fill="#5fe15c"/><path d="M8 8 L5.11 2.07 A6.6 6.6 0 0 1 10.89 2.07Z" fill="#27b36b"/><circle cx="8" cy="8" r="2.8" fill="#151515"/></svg><svg class="a" style="left:21px;top:2px" width="17" height="15" viewBox="0 0 17 15"><rect x="1.6" y="7.6" width="12.4" height="4.2" fill="#fff" stroke="#111" stroke-width="2.2"/><path d="M3.4 10 L4.3 7 L10.3 1 L12.8 3.4 L6.8 9.3Z" fill="#f7c948" stroke="#6b4e12" stroke-width="0.6"/><path d="M10.3 1 L12.8 3.4 L11.8 4.4 L9.3 2Z" fill="#f3e6c8"/><path d="M15.5 10 L15.5 14 L11.5 14Z" fill="#1fa3d4"/></svg><svg class="a" style="left:41px;top:0.5px" width="16" height="16" viewBox="0 0 16 16"><rect x="0.5" y="0.5" width="15" height="15" rx="1" fill="#f6f6f6" stroke="#7d8a94"/><rect x="0.5" y="0.5" width="15" height="3" fill="#31b5e6"/><path d="M2.5 6.5 C6 6.5 6 12 9 12 M2.5 12 C5.5 12 7 6.5 11 6.5 L12.5 6.5" fill="none" stroke="#222" stroke-width="1.15"/><path d="M11 4.5 L13.8 6.5 L11 8.5Z" fill="#151515"/><path d="M10.5 10.5 L13.5 12.3 L10.5 14Z" fill="none" stroke="#666" stroke-width="0.7"/></svg></div><pre style="top:21px"><span class="d">.text:00000000000013F7 48 8D 85 E0 FE FF FF </span><span class="m">lea     </span><span class="r">rax</span><span class="p">, </span><span class="p">[</span><span class="r">rbp</span><span class="p">+</span><span class="v">clean_input</span><span class="p">]</span>
<span class="d">.text:00000000000013FE 48 89 C7             </span><span class="m">mov     </span><span class="r">rdi</span><span class="p">, </span><span class="r">rax</span>        <span class="rc">; s</span>
<span class="d">.text:0000000000001401 E8 EA FC FF FF       </span><span class="m">call    </span><span class="f">_strlen</span>
<span class="d">.text:0000000000001406 89 85 CC FD FF FF    </span><span class="m">mov     </span><span class="p">[</span><span class="r">rbp</span><span class="p">+</span><span class="v">len_clean_input</span><span class="p">]</span><span class="p">, </span><span class="r">eax</span>
<span class="d">.text:000000000000140C 8B 95 C4 FD FF FF    </span><span class="m">mov     </span><span class="r">edx</span><span class="p">, </span><span class="p">[</span><span class="r">rbp</span><span class="p">+</span><span class="v">f</span><span class="p">]</span>
<span class="d">.text:0000000000001412 8B 8D CC FD FF FF    </span><span class="m">mov     </span><span class="r">ecx</span><span class="p">, </span><span class="p">[</span><span class="r">rbp</span><span class="p">+</span><span class="v">len_clean_input</span><span class="p">]</span>
<span class="d">.text:0000000000001418 48 8D 85 E0 FE FF FF </span><span class="m">lea     </span><span class="r">rax</span><span class="p">, </span><span class="p">[</span><span class="r">rbp</span><span class="p">+</span><span class="v">clean_input</span><span class="p">]</span>
<span class="d">.text:000000000000141F 89 CE                </span><span class="m">mov     </span><span class="r">esi</span><span class="p">, </span><span class="r">ecx</span>
<span class="d">.text:0000000000001421 48 89 C7             </span><span class="m">mov     </span><span class="r">rdi</span><span class="p">, </span><span class="r">rax</span>
<span class="d">.text:0000000000001424 E8 20 FE FF FF       </span><span class="m">call    </span><span class="f">sub_1249</span>
<span class="d">.text:0000000000001429 48 8D 05 FB 0B 00 00 </span><span class="m">lea     </span><span class="r">rax</span><span class="p">, </span><span class="m">aYgtaU3gT0h0agR</span><span class="c"> ; "Ygta_u3G_t0h_0aG_r3"</span>
<span class="d">.text:0000000000001430 48 89 85 D8 FD FF FF </span><span class="m">mov     </span><span class="p">[</span><span class="r">rbp</span><span class="p">+</span><span class="v">s1</span><span class="p">]</span><span class="p">, </span><span class="r">rax</span>
<span class="d">.text:0000000000001437 48 8D 95 E0 FE FF FF </span><span class="m">lea     </span><span class="r">rdx</span><span class="p">, </span><span class="p">[</span><span class="r">rbp</span><span class="p">+</span><span class="v">clean_input</span><span class="p">]</span>
<span class="d">.text:000000000000143E 48 8B 85 D8 FD FF FF </span><span class="m">mov     </span><span class="r">rax</span><span class="p">, </span><span class="p">[</span><span class="r">rbp</span><span class="p">+</span><span class="v">s1</span><span class="p">]</span>
<span class="d">.text:0000000000001445 48 89 D6             </span><span class="m">mov     </span><span class="r">rsi</span><span class="p">, </span><span class="r">rdx</span>        <span class="rc">; s2</span>
<span class="d">.text:0000000000001448 48 89 C7             </span><span class="m">mov     </span><span class="r">rdi</span><span class="p">, </span><span class="r">rax</span>        <span class="rc">; s1</span>
<span class="d">.text:000000000000144B E8 F0 FC FF FF       </span><span class="m">call    </span><span class="f">_strcmp</span>
<span class="d">.text:0000000000001450 85 C0                </span><span class="m">test    </span><span class="r">eax</span><span class="p">, </span><span class="r">eax</span>
<span class="d">.text:0000000000001452 75 11                </span><span class="m">jnz     </span><span class="p">short </span><span class="f">loc_1465</span></pre></div>
<div class="node" style="left:1350px;top:20px;width:200px;height:394px"><div class="tb" style="height:19px"><svg class="a" style="left:0.5px;top:1px" width="16" height="16" viewBox="0 0 16 16"><circle cx="8" cy="8" r="7.7" fill="#111"/><path d="M8 8 L11.69 2.53 A6.6 6.6 0 0 1 14.58 7.54Z" fill="#1d7f9f"/><path d="M8 8 L14.58 8.46 A6.6 6.6 0 0 1 11.69 13.47Z" fill="#f0602d"/><path d="M8 8 L10.89 13.93 A6.6 6.6 0 0 1 5.11 13.93Z" fill="#e3295c"/><path d="M8 8 L4.31 13.47 A6.6 6.6 0 0 1 1.42 8.46Z" fill="#f5a3a6"/><path d="M8 8 L1.42 7.54 A6.6 6.6 0 0 1 4.31 2.53Z" fill="#5fe15c"/><path d="M8 8 L5.11 2.07 A6.6 6.6 0 0 1 10.89 2.07Z" fill="#27b36b"/><circle cx="8" cy="8" r="2.8" fill="#151515"/></svg><svg class="a" style="left:21px;top:2px" width="17" height="15" viewBox="0 0 17 15"><rect x="1.6" y="7.6" width="12.4" height="4.2" fill="#fff" stroke="#111" stroke-width="2.2"/><path d="M3.4 10 L4.3 7 L10.3 1 L12.8 3.4 L6.8 9.3Z" fill="#f7c948" stroke="#6b4e12" stroke-width="0.6"/><path d="M10.3 1 L12.8 3.4 L11.8 4.4 L9.3 2Z" fill="#f3e6c8"/><path d="M15.5 10 L15.5 14 L11.5 14Z" fill="#1fa3d4"/></svg><svg class="a" style="left:41px;top:0.5px" width="16" height="16" viewBox="0 0 16 16"><rect x="0.5" y="0.5" width="15" height="15" rx="1" fill="#f6f6f6" stroke="#7d8a94"/><rect x="0.5" y="0.5" width="15" height="3" fill="#31b5e6"/><path d="M2.5 6.5 C6 6.5 6 12 9 12 M2.5 12 C5.5 12 7 6.5 11 6.5 L12.5 6.5" fill="none" stroke="#222" stroke-width="1.15"/><path d="M11 4.5 L13.8 6.5 L11 8.5Z" fill="#151515"/><path d="M10.5 10.5 L13.5 12.3 L10.5 14Z" fill="none" stroke="#666" stroke-width="0.7"/></svg></div><pre style="top:21px"><span class="d">.text:00000000000012E4</span>
<span class="d">.text:00000000000012E4</span>
<span class="d">.text:00000000000012E8</span>
<span class="d">.text:00000000000012E9</span>
<span class="d">.text:00000000000012EC</span>
<span class="d">.text:00000000000012F3</span>
<span class="d">.text:00000000000012F9</span>
<span class="d">.text:0000000000001300</span>
<span class="d">.text:0000000000001309</span>
<span class="d">.text:000000000000130D</span>
<span class="d">.text:000000000000130F</span>
<span class="d">.text:0000000000001314</span>
<span class="d">.text:0000000000001316</span>
<span class="d">.text:000000000000131B</span>
<span class="d">.text:0000000000001320</span>
<span class="d">.text:0000000000001327</span></pre></div>
<div class="node" style="left:-112px;top:513px;width:796px;height:118px"><div class="tb" style="height:19px"><svg class="a" style="left:0.5px;top:1px" width="16" height="16" viewBox="0 0 16 16"><circle cx="8" cy="8" r="7.7" fill="#111"/><path d="M8 8 L11.69 2.53 A6.6 6.6 0 0 1 14.58 7.54Z" fill="#1d7f9f"/><path d="M8 8 L14.58 8.46 A6.6 6.6 0 0 1 11.69 13.47Z" fill="#f0602d"/><path d="M8 8 L10.89 13.93 A6.6 6.6 0 0 1 5.11 13.93Z" fill="#e3295c"/><path d="M8 8 L4.31 13.47 A6.6 6.6 0 0 1 1.42 8.46Z" fill="#f5a3a6"/><path d="M8 8 L1.42 7.54 A6.6 6.6 0 0 1 4.31 2.53Z" fill="#5fe15c"/><path d="M8 8 L5.11 2.07 A6.6 6.6 0 0 1 10.89 2.07Z" fill="#27b36b"/><circle cx="8" cy="8" r="2.8" fill="#151515"/></svg><svg class="a" style="left:21px;top:2px" width="17" height="15" viewBox="0 0 17 15"><rect x="1.6" y="7.6" width="12.4" height="4.2" fill="#fff" stroke="#111" stroke-width="2.2"/><path d="M3.4 10 L4.3 7 L10.3 1 L12.8 3.4 L6.8 9.3Z" fill="#f7c948" stroke="#6b4e12" stroke-width="0.6"/><path d="M10.3 1 L12.8 3.4 L11.8 4.4 L9.3 2Z" fill="#f3e6c8"/><path d="M15.5 10 L15.5 14 L11.5 14Z" fill="#1fa3d4"/></svg><svg class="a" style="left:41px;top:0.5px" width="16" height="16" viewBox="0 0 16 16"><rect x="0.5" y="0.5" width="15" height="15" rx="1" fill="#f6f6f6" stroke="#7d8a94"/><rect x="0.5" y="0.5" width="15" height="3" fill="#31b5e6"/><path d="M2.5 6.5 C6 6.5 6 12 9 12 M2.5 12 C5.5 12 7 6.5 11 6.5 L12.5 6.5" fill="none" stroke="#222" stroke-width="1.15"/><path d="M11 4.5 L13.8 6.5 L11 8.5Z" fill="#151515"/><path d="M10.5 10.5 L13.5 12.3 L10.5 14Z" fill="none" stroke="#666" stroke-width="0.7"/></svg></div><pre style="top:21px"><span class="d">.text:0000000000001454 48 8D 05 E4 0B 00 00 </span><span class="m">lea     </span><span class="r">rax</span><span class="p">, </span><span class="m">aGoodJob</span>   <span class="c">; "Good Job !"</span>
<span class="d">.text:000000000000145B 48 89 C7             </span><span class="m">mov     </span><span class="r">rdi</span><span class="p">, </span><span class="r">rax</span>        <span class="rc">; s</span>
<span class="d">.text:000000000000145E E8 7D FC FF FF       </span><span class="m">call    </span><span class="f">_puts</span>
<span class="d">.text:0000000000001463 EB 0F                </span><span class="m">jmp     </span><span class="p">short </span><span class="f">loc_1474</span></pre></div>
<div class="node" style="left:694px;top:513px;width:900px;height:141px"><div class="tb" style="height:19px"><svg class="a" style="left:0.5px;top:1px" width="16" height="16" viewBox="0 0 16 16"><circle cx="8" cy="8" r="7.7" fill="#111"/><path d="M8 8 L11.69 2.53 A6.6 6.6 0 0 1 14.58 7.54Z" fill="#1d7f9f"/><path d="M8 8 L14.58 8.46 A6.6 6.6 0 0 1 11.69 13.47Z" fill="#f0602d"/><path d="M8 8 L10.89 13.93 A6.6 6.6 0 0 1 5.11 13.93Z" fill="#e3295c"/><path d="M8 8 L4.31 13.47 A6.6 6.6 0 0 1 1.42 8.46Z" fill="#f5a3a6"/><path d="M8 8 L1.42 7.54 A6.6 6.6 0 0 1 4.31 2.53Z" fill="#5fe15c"/><path d="M8 8 L5.11 2.07 A6.6 6.6 0 0 1 10.89 2.07Z" fill="#27b36b"/><circle cx="8" cy="8" r="2.8" fill="#151515"/></svg><svg class="a" style="left:21px;top:2px" width="17" height="15" viewBox="0 0 17 15"><rect x="1.6" y="7.6" width="12.4" height="4.2" fill="#fff" stroke="#111" stroke-width="2.2"/><path d="M3.4 10 L4.3 7 L10.3 1 L12.8 3.4 L6.8 9.3Z" fill="#f7c948" stroke="#6b4e12" stroke-width="0.6"/><path d="M10.3 1 L12.8 3.4 L11.8 4.4 L9.3 2Z" fill="#f3e6c8"/><path d="M15.5 10 L15.5 14 L11.5 14Z" fill="#1fa3d4"/></svg><svg class="a" style="left:41px;top:0.5px" width="16" height="16" viewBox="0 0 16 16"><rect x="0.5" y="0.5" width="15" height="15" rx="1" fill="#f6f6f6" stroke="#7d8a94"/><rect x="0.5" y="0.5" width="15" height="3" fill="#31b5e6"/><path d="M2.5 6.5 C6 6.5 6 12 9 12 M2.5 12 C5.5 12 7 6.5 11 6.5 L12.5 6.5" fill="none" stroke="#222" stroke-width="1.15"/><path d="M11 4.5 L13.8 6.5 L11 8.5Z" fill="#151515"/><path d="M10.5 10.5 L13.5 12.3 L10.5 14Z" fill="none" stroke="#666" stroke-width="0.7"/></svg></div><pre style="top:21px"><span class="d">.text:0000000000001465</span>
<span class="d">.text:0000000000001465                      </span><span class="f">loc_1465</span><span class="p">:</span>
<span class="d">.text:0000000000001465 48 8D 05 DE 0B 00 00 </span><span class="m">lea     </span><span class="r">rax</span><span class="p">, </span><span class="m">aNoMaybeAnother</span><span class="c"> ; "No... Maybe another time !"</span>
<span class="d">.text:000000000000146C 48 89 C7             </span><span class="m">mov     </span><span class="r">rdi</span><span class="p">, </span><span class="r">rax</span>        <span class="rc">; s</span>
<span class="d">.text:000000000000146F E8 6C FC FF FF       </span><span class="m">call    </span><span class="f">_puts</span></pre></div>
<div class="node" style="left:-417px;top:684px;width:584px;height:100px"><div class="tb" style="height:19px"><svg class="a" style="left:0.5px;top:1px" width="16" height="16" viewBox="0 0 16 16"><circle cx="8" cy="8" r="7.7" fill="#111"/><path d="M8 8 L11.69 2.53 A6.6 6.6 0 0 1 14.58 7.54Z" fill="#1d7f9f"/><path d="M8 8 L14.58 8.46 A6.6 6.6 0 0 1 11.69 13.47Z" fill="#f0602d"/><path d="M8 8 L10.89 13.93 A6.6 6.6 0 0 1 5.11 13.93Z" fill="#e3295c"/><path d="M8 8 L4.31 13.47 A6.6 6.6 0 0 1 1.42 8.46Z" fill="#f5a3a6"/><path d="M8 8 L1.42 7.54 A6.6 6.6 0 0 1 4.31 2.53Z" fill="#5fe15c"/><path d="M8 8 L5.11 2.07 A6.6 6.6 0 0 1 10.89 2.07Z" fill="#27b36b"/><circle cx="8" cy="8" r="2.8" fill="#151515"/></svg><svg class="a" style="left:21px;top:2px" width="17" height="15" viewBox="0 0 17 15"><rect x="1.6" y="7.6" width="12.4" height="4.2" fill="#fff" stroke="#111" stroke-width="2.2"/><path d="M3.4 10 L4.3 7 L10.3 1 L12.8 3.4 L6.8 9.3Z" fill="#f7c948" stroke="#6b4e12" stroke-width="0.6"/><path d="M10.3 1 L12.8 3.4 L11.8 4.4 L9.3 2Z" fill="#f3e6c8"/><path d="M15.5 10 L15.5 14 L11.5 14Z" fill="#1fa3d4"/></svg><svg class="a" style="left:41px;top:0.5px" width="16" height="16" viewBox="0 0 16 16"><rect x="0.5" y="0.5" width="15" height="15" rx="1" fill="#f6f6f6" stroke="#7d8a94"/><rect x="0.5" y="0.5" width="15" height="3" fill="#31b5e6"/><path d="M2.5 6.5 C6 6.5 6 12 9 12 M2.5 12 C5.5 12 7 6.5 11 6.5 L12.5 6.5" fill="none" stroke="#222" stroke-width="1.15"/><path d="M11 4.5 L13.8 6.5 L11 8.5Z" fill="#151515"/><path d="M10.5 10.5 L13.5 12.3 L10.5 14Z" fill="none" stroke="#666" stroke-width="0.7"/></svg></div><pre style="top:21px"><span class="d">.text:0000000000001468 B8 01 00 00 00       </span><span class="m">mov     </span><span class="r">eax</span><span class="p">, </span><span class="n">1</span>
<span class="d">.text:000000000000146D EB 0A                </span><span class="m">jmp     </span><span class="f">loc_1479</span>
<span class="d">.text:000000000000146F</span></pre></div>
<div class="node" style="left:177px;top:684px;width:565px;height:100px"><div class="tb" style="height:19px"><svg class="a" style="left:0.5px;top:1px" width="16" height="16" viewBox="0 0 16 16"><circle cx="8" cy="8" r="7.7" fill="#111"/><path d="M8 8 L11.69 2.53 A6.6 6.6 0 0 1 14.58 7.54Z" fill="#1d7f9f"/><path d="M8 8 L14.58 8.46 A6.6 6.6 0 0 1 11.69 13.47Z" fill="#f0602d"/><path d="M8 8 L10.89 13.93 A6.6 6.6 0 0 1 5.11 13.93Z" fill="#e3295c"/><path d="M8 8 L4.31 13.47 A6.6 6.6 0 0 1 1.42 8.46Z" fill="#f5a3a6"/><path d="M8 8 L1.42 7.54 A6.6 6.6 0 0 1 4.31 2.53Z" fill="#5fe15c"/><path d="M8 8 L5.11 2.07 A6.6 6.6 0 0 1 10.89 2.07Z" fill="#27b36b"/><circle cx="8" cy="8" r="2.8" fill="#151515"/></svg><svg class="a" style="left:21px;top:2px" width="17" height="15" viewBox="0 0 17 15"><rect x="1.6" y="7.6" width="12.4" height="4.2" fill="#fff" stroke="#111" stroke-width="2.2"/><path d="M3.4 10 L4.3 7 L10.3 1 L12.8 3.4 L6.8 9.3Z" fill="#f7c948" stroke="#6b4e12" stroke-width="0.6"/><path d="M10.3 1 L12.8 3.4 L11.8 4.4 L9.3 2Z" fill="#f3e6c8"/><path d="M15.5 10 L15.5 14 L11.5 14Z" fill="#1fa3d4"/></svg><svg class="a" style="left:41px;top:0.5px" width="16" height="16" viewBox="0 0 16 16"><rect x="0.5" y="0.5" width="15" height="15" rx="1" fill="#f6f6f6" stroke="#7d8a94"/><rect x="0.5" y="0.5" width="15" height="3" fill="#31b5e6"/><path d="M2.5 6.5 C6 6.5 6 12 9 12 M2.5 12 C5.5 12 7 6.5 11 6.5 L12.5 6.5" fill="none" stroke="#222" stroke-width="1.15"/><path d="M11 4.5 L13.8 6.5 L11 8.5Z" fill="#151515"/><path d="M10.5 10.5 L13.5 12.3 L10.5 14Z" fill="none" stroke="#666" stroke-width="0.7"/></svg></div><pre style="top:21px"><span class="d">.text:0000000000001474</span>
<span class="d">.text:0000000000001474                      </span><span class="f">loc_1474</span><span class="p">:</span>
<span class="d">.text:0000000000001474 B8 00 00 00 00       </span><span class="m">mov     </span><span class="r">eax</span><span class="p">, </span><span class="n">0</span></pre></div>
</div>

<div class="a" style="left:373px;top:903px;width:1489px;height:21px;background:#353535"></div>
<div class="sbox" style="left:373.5px;width:66px"></div><span class="sb" style="left:376.0px;top:906px">100.00%</span>
<div class="sbox" style="left:442.5px;width:93px"></div><span class="sb" style="left:445.0px;top:906px">(511,1758)</span>
<div class="sbox" style="left:538.5px;width:74.5px"></div><span class="sb" style="left:541.0px;top:906px">(1024,0)</span>
<div class="sbox" style="left:616.5px;width:74.5px"></div><span class="sb" style="left:619.0px;top:906px">000012E4</span>
<div class="sbox" style="left:694px;width:201.5px"></div><span class="sb" style="left:696.5px;top:906px">00000000000012E4: main</span>
<div class="sbox" style="left:899px;width:272.5px"></div><span class="sb" style="left:901.5px;top:906px">(Synchronized with Hex View-1)</span>
<div class="a" style="left:0;top:924px;width:1862px;height:20px;background:#353535"></div>
<div class="sbox" style="left:-2px;top:926px;width:102px;height:20px"></div><span class="sb" style="left:0px;top:927px">AU:  idle</span>
<div class="sbox" style="left:103px;top:926px;width:73.5px;height:20px"></div><span class="sb" style="left:104px;top:927px">Down</span>
<div class="sbox" style="left:179.5px;top:926px;width:93px;height:20px"></div><span class="sb" style="left:180.5px;top:927px">Disk: 11GB</span>
</body></html>
